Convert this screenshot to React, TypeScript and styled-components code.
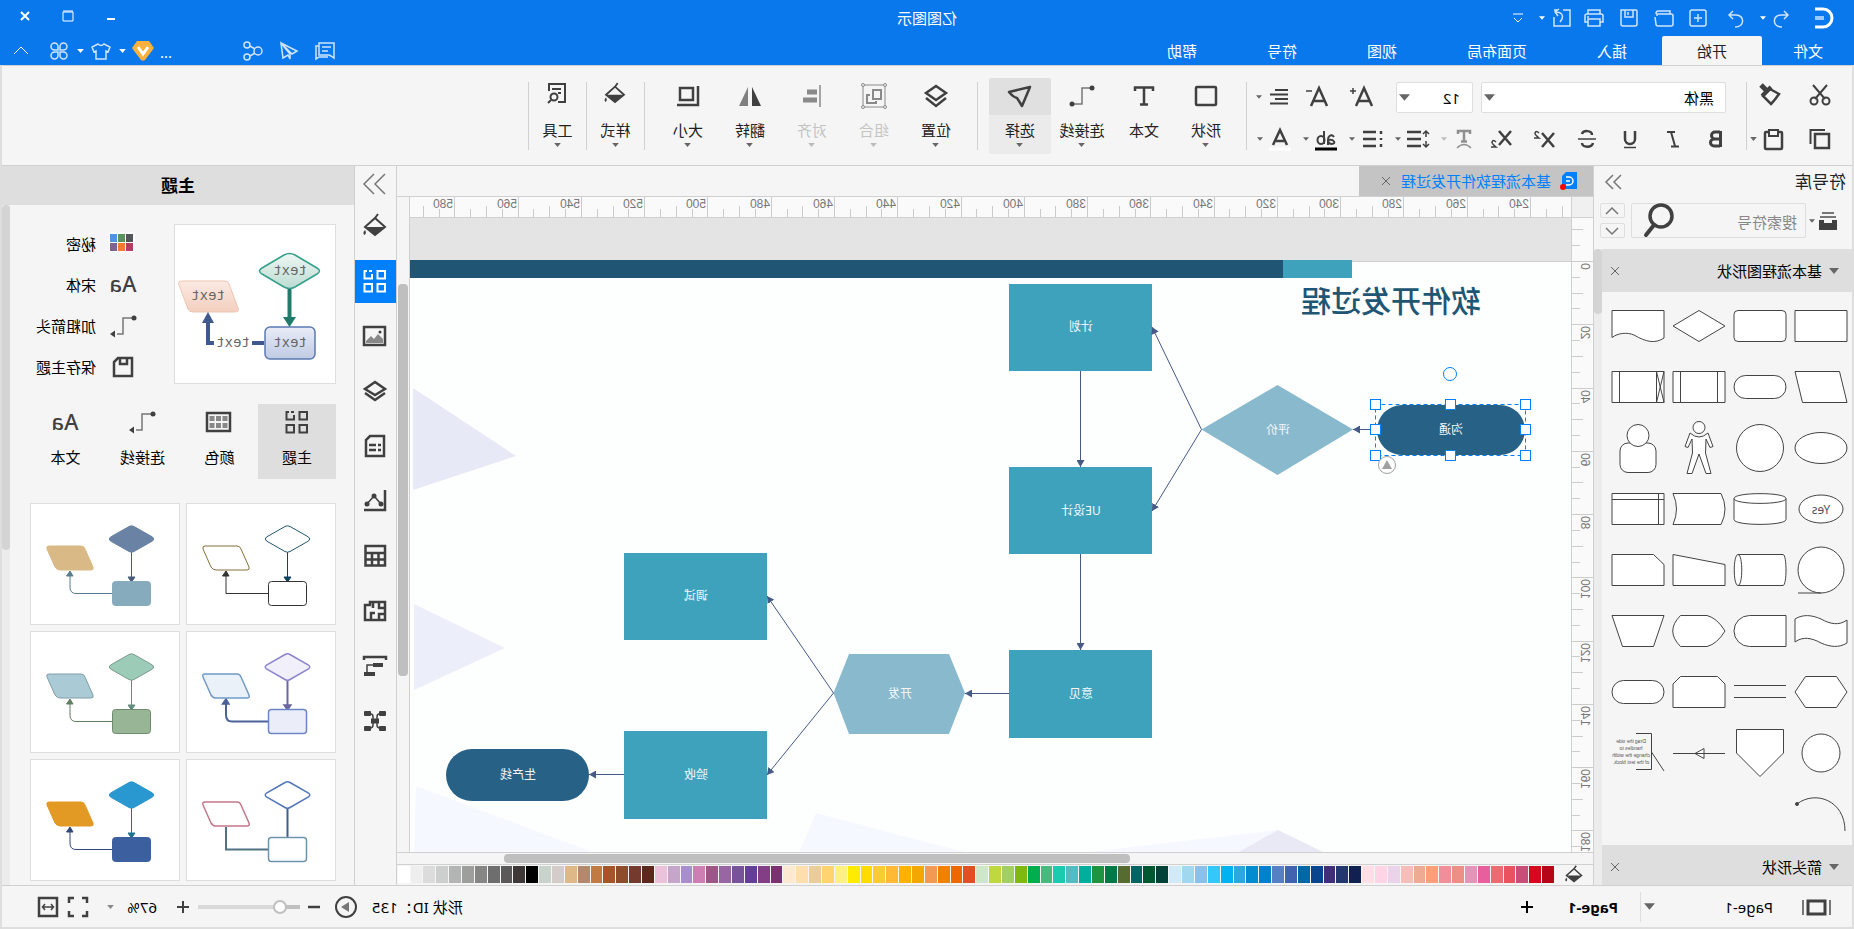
import React from "react";
import styled, { createGlobalStyle, css } from "styled-components";

const ink = "#404040";
const line = "#d0d0d0";
const soft = "#dedede";
const panel = "#f5f5f5";
const brand = "#0a78ed";
const accent = "#0080ff";

const GlobalStyle = createGlobalStyle`
  * { box-sizing: border-box; }
  body {
    margin: 0;
    overflow: hidden;
    font-family: "Noto Sans", "Noto Sans CJK SC", sans-serif;
    font-size: 15px;
    line-height: 20px;
    color: #000;
  }
  button, input, select { font: inherit; color: inherit; }
  button { border: 0; padding: 0; background: none; cursor: pointer; }
`;

/* The whole window is shown as in a mirror. */
const Window = styled.div`
  transform: scaleX(-1);
  display: flex;
  flex-direction: column;
  height: 100vh;
  background: ${panel};
`;

const Art = styled.svg`
  display: block;
  flex: none;
  overflow: visible;
  fill: none;
  stroke: currentColor;
`;

type IconProps = { s?: number; sw?: number; children: React.ReactNode };
const Icon = ({ s = 24, sw = 2, children }: IconProps) => (
  <Art width={s} height={s} viewBox={`${-s / 2} ${-s / 2} ${s} ${s}`} strokeWidth={sw} aria-hidden="true">
    {children}
  </Art>
);

const CaretSvg = styled.svg<{ $c?: string }>`
  display: block;
  flex: none;
  fill: ${(p) => p.$c ?? "#666"};
`;
const Caret = ({ w = 8, c }: { w?: number; c?: string }) => (
  <CaretSvg $c={c} width={w} height={Math.round(w * 0.6)} viewBox="0 0 10 6" aria-hidden="true">
    <path d="M0 0H10L5 6Z" />
  </CaretSvg>
);

/* ---------- title bar ---------- */

const Header = styled.header`
  flex: none;
  color: #fff;
  background: ${brand};
`;
const TitleRow = styled.div`
  display: grid;
  grid-template-columns: 1fr auto 1fr;
  align-items: center;
  height: 36px;
`;
const Quick = styled.div`
  display: flex;
  align-items: center;
  padding-left: 2px;
`;
const Cell = styled.button<{ $w: number }>`
  display: flex;
  align-items: center;
  justify-content: center;
  flex: none;
  width: ${(p) => p.$w}px;
  height: 28px;
`;
const WindowButtons = styled.div`
  display: flex;
  justify-content: flex-end;
  padding: 0 4px 4px 0;
`;
const MenuRow = styled.nav`
  display: flex;
  height: 29px;
`;
const MenuTab = styled.button<{ $on?: boolean }>`
  padding: 0 35px;
  border-radius: 2px 2px 0 0;
  ${(p) => p.$on && css`
    color: #222;
    background: ${panel};
  `}
  &:first-child { padding: 0 31px; }
`;
const MenuActions = styled.div`
  display: flex;
  align-items: center;
  margin-left: auto;
`;
const Share = styled.div`
  display: flex;
  margin-right: 63px;
`;
const Dots = styled.span`
  width: 15px;
  padding-top: 2px;
`;

const pale = "#cfe5ff";

const Logo = () => (
  <Icon s={22} sw={3}>
    <path d="M8 -9H0A9 9 0 0 0 0 9H8" stroke="#fff" />
    <path d="M-1 0H8" stroke="#9cc9fb" strokeWidth={4} />
  </Icon>
);

const TitleBar = () => (
  <Header>
    <TitleRow>
      <Quick>
        <Cell $w={58} aria-label="logo"><Logo /></Cell>
        <Cell $w={26} aria-label="撤销"><Icon><path stroke={pale} strokeWidth={1.5} d="M-3 -7L-7 -3L-3 1M-7 -3H0C9 -3 9 9 -1 9" /></Icon></Cell>
        <Cell $w={10} aria-label="撤销列表"><Caret w={6} c="#fff" /></Cell>
        <Cell $w={44} aria-label="重做"><Icon><path stroke={pale} strokeWidth={1.5} d="M3 -7L7 -3L3 1M7 -3H0C-9 -3 -9 9 1 9" /></Icon></Cell>
        <Cell $w={32} aria-label="新建"><Icon><g stroke={pale} strokeWidth={1.5}><rect x={-8} y={-8} width={16} height={16} rx={2} /><path d="M0 -4V4M-4 0H4" /></g></Icon></Cell>
        <Cell $w={35} aria-label="打开"><Icon><path stroke={pale} strokeWidth={1.5} d="M-6 -4V-7H6Q8 -7 8 -4M-9 -2Q-9 -4 -7 -4H7V-2M-9 -2V6Q-9 8 -7 8H6Q8 8 8 6L9 -1" /></Icon></Cell>
        <Cell $w={35} aria-label="保存"><Icon><path stroke={pale} strokeWidth={1.5} d="M-8 -7Q-8 -8 -7 -8H8V6Q8 8 6 8H-6Q-8 8 -8 6ZM-4 -8V-1H4V-8M1 -6V-3" /></Icon></Cell>
        <Cell $w={35} aria-label="打印"><Icon><path stroke={pale} strokeWidth={1.5} d="M-6 -4V-8H6V-4M-6 4H-9V-2Q-9 -4 -7 -4H7Q9 -4 9 -2V4H6M-6 1H6V8H-6ZM5 -1H7" /></Icon></Cell>
        <Cell $w={30} aria-label="导出"><Icon><path stroke={pale} strokeWidth={1.5} d="M-1 -8H-8V8H8V-1M8 -8H5M2 4C-3 -2 0 -6 7 -6M3 -9L7 -6L4 -2" /></Icon></Cell>
        <Cell $w={10} aria-label="导出列表"><Caret w={6} c="#fff" /></Cell>
        <Cell $w={38} aria-label="自定义"><Icon s={16} sw={1}><path stroke="#fff" d="M-5 -4H5M-4 0L0 4L4 0" /></Icon></Cell>
      </Quick>
      <div>亿图图示</div>
      <WindowButtons>
        <Cell $w={43} aria-label="最小化"><Icon s={16}><path d="M-4 3H4" /></Icon></Cell>
        <Cell $w={43} aria-label="最大化"><Icon s={16} sw={1}><path d="M-5 -4H5V5H-5ZM-5 -5H5" /></Icon></Cell>
        <Cell $w={43} aria-label="关闭"><Icon s={16}><path d="M-4 -4L4 4M4 -4L-4 4" /></Icon></Cell>
      </WindowButtons>
    </TitleRow>
    <MenuRow>
      {["文件", "开始", "插入", "页面布局", "视图", "符号", "帮助"].map((t, i) => (
        <MenuTab key={t} $on={i === 1}>{t}</MenuTab>
      ))}
      <MenuActions>
        <Share>
          <Cell $w={36} aria-label="评论"><Icon><path stroke={pale} strokeWidth={1.5} d="M-9 -8H6V4H-4L-6 5L-9 7ZM6 -5H9V8L6 6H-3M-6 -4H3M-3 0H3" /></Icon></Cell>
          <Cell $w={36} aria-label="发送"><Icon><path stroke={pale} strokeWidth={1.5} d="M8 -8L-8 0L-3 3L8 -8L6 7L1 4L-1 8V3L8 -8" /></Icon></Cell>
          <Cell $w={36} aria-label="分享"><Icon><g stroke={pale} strokeWidth={1.5}><circle cx={-5} cy={0} r={4} /><circle cx={6} cy={-6} r={3} /><circle cx={6} cy={6} r={3} /><path d="M-2 -2L3 -5M-2 2L3 5" /></g></Icon></Cell>
        </Share>
        <Dots>...</Dots>
        <Cell $w={28} aria-label="会员"><Icon><path d="M-6 -10H6L11 -3L2 9Q0 10 -2 9L-11 -3Z" fill="#fdb13d" stroke="none" /><path d="M-5 -4L0 3L5 -4" stroke="#fff" strokeWidth={3} /></Icon></Cell>
        <Cell $w={12} aria-label="会员列表"><Caret w={7} c="#fff" /></Cell>
        <Cell $w={32} aria-label="皮肤"><Icon><path stroke={pale} strokeWidth={1.5} d="M-3 -7Q0 -4 3 -7L9 -4L7 1L5 0V8H-5V0L-7 1L-9 -4Z" /></Icon></Cell>
        <Cell $w={8} aria-label="皮肤列表"><Caret w={7} c="#fff" /></Cell>
        <Cell $w={35} aria-label="应用"><Icon><path stroke={pale} strokeWidth={1.5} d="M-1 -1H-4.5A3.5 3.5 0 1 1 -1 -4.5ZM1 -1V-4.5A3.5 3.5 0 1 1 4.5 -1ZM-1 1V4.5A3.5 3.5 0 1 1 -4.5 1ZM1 1H4.5A3.5 3.5 0 1 1 1 4.5Z" /></Icon></Cell>
        <Cell $w={42} aria-label="收起"><Icon sw={1}><path d="M-7 3L0 -4L7 3" /></Icon></Cell>
      </MenuActions>
    </MenuRow>
  </Header>
);

/* ---------- ribbon ---------- */

const Body = styled.div`
  display: flex;
  flex: 1;
  flex-direction: column;
  min-height: 0;
  border: 2px solid ${soft};
  border-top: 0;
`;
const Ribbon = styled.div`
  display: flex;
  align-items: center;
  flex: none;
  height: 101px;
  border-top: 1px solid ${line};
  border-bottom: 1px solid ${line};
`;
const Rule = styled.div`
  width: 1px;
  height: 68px;
  background: ${line};
`;
const Clipboard = styled.div`
  display: grid;
  grid-template-columns: 50px 43px;
  grid-template-rows: 44px 44px;
  align-items: center;
  padding: 3px 0 0 12px;
  color: ${ink};
`;
const FontGroup = styled.div`
  display: flex;
  flex-direction: column;
  width: 499px;
  padding-top: 5px;
  color: ${ink};
`;
const FontRow = styled.div<{ $left: number }>`
  display: flex;
  align-items: center;
  height: 42px;
  padding-left: ${(p) => p.$left}px;
`;
const SelectBox = styled.div<{ $w: number; $gap: number }>`
  display: grid;
  align-items: center;
  width: ${(p) => p.$w}px;
  margin-right: ${(p) => p.$gap}px;
  > * { grid-area: 1 / 1; }
  > svg { justify-self: end; margin-right: 3px; pointer-events: none; }
`;
const Select = styled.select<{ $pad: number }>`
  appearance: none;
  width: 100%;
  height: 31px;
  padding: 2px 0 0 ${(p) => p.$pad}px;
  border: 1px solid ${soft};
  border-radius: 2px;
  color: #000;
  background: #fff;
`;
const Plain = styled.button<{ $w: number }>`
  display: flex;
  align-items: center;
  justify-content: center;
  width: ${(p) => p.$w}px;
  height: 30px;
`;
const Split = styled.button`
  display: grid;
  grid-template-columns: 24px 8px;
  align-items: center;
  justify-items: center;
  gap: 4px;
  width: 46px;
  height: 30px;
  padding-left: 4px;
  &:disabled { color: #909090; }
`;
const Tools = styled.div<{ $l: number; $r: number }>`
  display: flex;
  padding: 0 ${(p) => p.$r}px 0 ${(p) => p.$l}px;
`;
const Tool = styled.button<{ $on?: boolean; $w?: number }>`
  display: flex;
  flex-direction: column;
  align-items: center;
  width: ${(p) => p.$w ?? 62}px;
  height: 76px;
  border-radius: 2px;
  color: #222;
  background: ${(p) => (p.$on ? "linear-gradient(#e0e0e0 37px, #ebebeb 37px)" : "none")};
  &:disabled { color: #c4c4c4; }
`;
const ToolArt = styled.span<{ $dim?: boolean }>`
  display: grid;
  place-items: center;
  height: 37px;
  margin-bottom: 5px;
  color: ${(p) => (p.$dim ? "#8a8a8a" : ink)};
`;
const ToolCaret = styled.span`
  padding-top: 3px;
`;

type ToolSpec = { label: string; art: React.ReactNode; on?: boolean; off?: boolean; noCaret?: boolean; w?: number };
const ToolButton = ({ label, art, on, off, noCaret, w }: ToolSpec) => (
  <Tool $on={on} $w={w} disabled={off}>
    <ToolArt $dim={off}><Icon s={26}>{art}</Icon></ToolArt>
    {label}
    {!noCaret && <ToolCaret><Caret w={7} c={off ? "#bbb" : "#666"} /></ToolCaret>}
  </Tool>
);

const drawTools: ToolSpec[] = [
  { label: "形状", art: <rect x={-10} y={-9} width={20} height={18} rx={1} strokeWidth={2.5} /> },
  { label: "文本", noCaret: true, art: <path strokeWidth={2.5} d="M-9 -5V-8.5H9V-5M0 -8V9M-4 8.5H4" /> },
  { label: "连接线", art: <><path d="M-8 -8H0V8H9" strokeWidth={1.5} stroke="#777" /><circle cx={-10} cy={-8} r={2.5} fill="currentColor" stroke="none" /><circle cx={10} cy={8} r={2.5} fill="currentColor" stroke="none" /></> },
  { label: "选择", on: true, art: <path strokeWidth={2.5} strokeLinejoin="round" d="M-10 -9L11 -4Q7 1 3 2Q1 5 -2 10Z" /> },
];
const layoutTools: ToolSpec[] = [
  { label: "位置", art: <path strokeWidth={2.5} d="M0 -10L10 -3L0 4L-10 -3ZM-10 2L0 10L10 2" /> },
  { label: "组合", off: true, art: <><rect x={-11} y={-11} width={22} height={22} strokeWidth={1} /><path d="M-7 -6H1V3H-7ZM4 -1H7V7H-2V5" /><g fill={panel} strokeWidth={1}><circle cx={-11} cy={-11} r={1.5} /><circle cx={11} cy={-11} r={1.5} /><circle cx={-11} cy={11} r={1.5} /><circle cx={11} cy={11} r={1.5} /></g></> },
  { label: "对齐", off: true, art: <><path d="M-8 -11V11" strokeWidth={1.5} /><path d="M-5 -4H5M-5 4H9" strokeWidth={5} /></> },
  { label: "翻转", art: <><path d="M-2 -9V10H-11Z" fill={ink} stroke="none" /><path d="M2 -9V10H11Z" fill="#808080" stroke="none" /></> },
  { label: "大小", art: <path strokeWidth={2.5} d="M-5 -8H8V4H-5ZM-10 -10V9H11" /> },
];
const Bucket = ({ k = 1 }: { k?: number }) => (
  <g transform={`scale(${k})`}>
    <path d="M-3 -11L0 -7L10 2L0 10L-10 2L0 -7" strokeWidth={2} />
    <path d="M-9 2H9L0 10Z" fill="currentColor" stroke="none" />
    <path d="M10 5Q13 8 10.5 10Q8 8 10 5Z" fill="currentColor" stroke="none" />
  </g>
);

const RibbonBar = () => (
  <Ribbon>
    <Clipboard>
      <Plain $w={40} aria-label="剪切"><Icon><path strokeWidth={2} d="M-7 -10L5 4M7 -10L-5 4" /><circle cx={-6} cy={6} r={3.5} /><circle cx={6} cy={6} r={3.5} /></Icon></Plain>
      <Plain $w={40} aria-label="格式刷"><Icon><path strokeWidth={2.5} d="M-9 -1L0 -6L7 1L-1 9Q-5 5 -9 -1Z" /><path d="M-1 -8L8 1" strokeWidth={4} /><path d="M4 -5L9 -10" strokeWidth={5} /></Icon></Plain>
      <Plain $w={40} aria-label="复制"><Icon><rect x={-9} y={-5} width={14} height={14} strokeWidth={2.5} /><path d="M-5 -9H9.5V5" /></Icon></Plain>
      <Split aria-label="粘贴"><Icon><rect x={-8} y={-7} width={17} height={17} rx={1} strokeWidth={2.5} /><rect x={-4} y={-9} width={9} height={6} fill={panel} /></Icon><Caret w={7} /></Split>
    </Clipboard>
    <Rule />
    <FontGroup>
      <FontRow $left={20}>
        <SelectBox $w={245} $gap={8}>
          <Select $pad={11} aria-label="字体"><option>黑体</option></Select>
          <Caret w={11} />
        </SelectBox>
        <SelectBox $w={77} $gap={11}>
          <Select $pad={12} aria-label="字号"><option>12</option></Select>
          <Caret w={11} />
        </SelectBox>
        <Plain $w={45} aria-label="增大字号"><Icon><path strokeWidth={2.5} d="M-10 9L-2 -9L6 9M-7 4H3" /><path strokeWidth={1.5} d="M6 -6H12M9 -9V-3" /></Icon></Plain>
        <Plain $w={45} aria-label="减小字号"><Icon><path strokeWidth={2.5} d="M-10 9L-2 -9L6 9M-7 4H3" /><path strokeWidth={1.5} d="M5 -6H11" /></Icon></Plain>
        <Split aria-label="对齐方式"><Icon><path strokeWidth={2} d="M-9 -7H4M-9 -2.5H9M-9 2H4M-9 6.5H9" /></Icon><Caret w={6} /></Split>
      </FontRow>
      <FontRow $left={8}>
        <Plain $w={43} aria-label="粗体"><Icon><path strokeWidth={3} d="M-4.5 -8V8M-4 -7H1A3.5 3.5 0 0 1 1 0H-4M1 0H2A3.5 3.5 0 0 1 2 7H-4" /></Icon></Plain>
        <Plain $w={43} aria-label="斜体"><Icon><path strokeWidth={2} d="M-2 -7H6M-6 7.5H2M2 -7L-2 7" /></Icon></Plain>
        <Plain $w={43} aria-label="下划线"><Icon><path strokeWidth={2.5} d="M-5 -8V0A5 5 0 0 0 5 0V-8" /><path strokeWidth={1.5} d="M-6 8.5H6" /></Icon></Plain>
        <Plain $w={43} aria-label="删除线"><Icon><path strokeWidth={2.5} d="M5 -5C4 -9 -5 -9 -5 -4M5 4C5 9 -5 9 -6 4" /><path strokeWidth={1.5} d="M-9 0H9" /></Icon></Plain>
        <Plain $w={43} aria-label="上标"><Icon><path strokeWidth={2.5} d="M-10 -6L2 8M2 -6L-10 8" /><path strokeWidth={1.5} d="M5 -6Q8 -9 9 -6Q9 -4 5 -1H10" /></Icon></Plain>
        <Plain $w={43} aria-label="下标"><Icon><path strokeWidth={2.5} d="M-10 -8L2 6M2 -8L-10 6" /><path strokeWidth={1.5} d="M5 3Q8 0 9 3Q9 5 5 8H10" /></Icon></Plain>
        <Split aria-label="文字效果" disabled><Icon><path strokeWidth={2.5} d="M-6 -5V-8H6V-5M0 -8V3M-3 2.5H3" /><path strokeWidth={1.5} d="M-7 9Q0 2 7 9" /></Icon><Caret w={6} c="#bbb" /></Split>
        <Split aria-label="行距"><Icon><path strokeWidth={2.5} d="M-3 -7H11M-3 0H11M-3 7H11" /><path strokeWidth={1.5} d="M-8 -7V-2M-8 2V7M-11 -5L-8 -8L-5 -5M-11 5L-8 8L-5 5" /></Icon><Caret w={6} /></Split>
        <Split aria-label="项目符号"><Icon><path strokeWidth={2.5} d="M-4 -7H9M-4 0H9M-4 7H9M-9 -8V-5M-9 -1V1M-9 5V8" /></Icon><Caret w={6} /></Split>
        <Split aria-label="突出显示"><Icon><path strokeWidth={2} d="M-8 -2Q-6 -5 -3.5 -3Q-2 -2 -2 1V6M-2 1C-9 0 -10 5 -6 5Q-3 5 -2 2M2 -8V5" /><ellipse cx={5} cy={1} rx={3.5} ry={4} /><path stroke="#000" strokeWidth={3} d="M-11 10H11" /></Icon><Caret w={6} /></Split>
        <Split aria-label="字体颜色"><Icon><path strokeWidth={2.5} d="M-7 6L0 -9L7 6M-4 2H4" /><path stroke="#fff" strokeWidth={3} d="M-11 10H11" /></Icon><Caret w={6} /></Split>
      </FontRow>
    </FontGroup>
    <Rule />
    <Tools $l={9} $r={11}>{drawTools.map((t) => <ToolButton key={t.label} {...t} />)}</Tools>
    <Rule />
    <Tools $l={10} $r={12}>{layoutTools.map((t) => <ToolButton key={t.label} {...t} />)}</Tools>
    <Rule />
    <ToolButton label="样式" w={57} art={<g transform="translate(0 -3)"><Bucket k={0.9} /></g>} />
    <Rule />
    <ToolButton label="工具" w={57} art={<g transform="translate(0 -3)"><path d="M-1 9H-8V-9H8V-2M-4 -4H5M-4 0H-1" /><circle cx={3} cy={4} r={3.5} /><path d="M6 7L9 10" /></g>} />
    <Rule />
  </Ribbon>
);

/* ---------- symbol library ---------- */

const Main = styled.main`
  display: flex;
  flex: 1;
  min-height: 0;
`;
const Library = styled.aside`
  display: flex;
  flex-direction: column;
  flex: none;
  width: 259px;
  border-right: 1px solid ${line};
  overflow: hidden;
`;
const LibraryHead = styled.div`
  display: flex;
  align-items: center;
  justify-content: space-between;
  flex: none;
  height: 32px;
  margin-bottom: 5px;
  padding: 0 12px 0 6px;
  font-size: 17px;
  color: #222;
`;
const SearchRow = styled.div`
  display: flex;
  align-items: center;
  flex: none;
  height: 35px;
  margin-bottom: 11px;
  padding: 0 5px 0 14px;
  color: ${ink};
`;
const ShelfButton = styled.button`
  display: flex;
  align-items: center;
  gap: 3px;
  width: 32px;
`;
const SearchBox = styled.label`
  display: flex;
  align-items: center;
  width: 175px;
  height: 35px;
  margin-right: 6px;
  padding: 0 14px 0 8px;
  border: 1px solid ${soft};
  border-radius: 2px;
`;
const SearchInput = styled.input`
  flex: 1;
  min-width: 0;
  padding: 2px 0 0;
  border: 0;
  outline: 0;
  background: none;
  &::placeholder { color: #888; opacity: 1; }
`;
const Steps = styled.div`
  display: flex;
  flex-direction: column;
  gap: 5px;
`;
const Step = styled.button`
  display: grid;
  place-items: center;
  width: 25px;
  height: 15px;
  border: 1px solid ${soft};
  border-radius: 2px;
`;
const LibraryScroll = styled.div`
  display: flex;
  flex: 1;
  min-height: 0;
`;
const LibraryList = styled.div`
  flex: 1;
  overflow: hidden;
`;
const Track = styled.div<{ $w: number }>`
  width: ${(p) => p.$w}px;
  background: #ececec;
`;
const Thumb = styled.div<{ $h: number; $dark?: boolean }>`
  height: ${(p) => p.$h}px;
  border-radius: 4px;
  background: ${(p) => (p.$dark ? "#bfbfbf" : "#d4d4d4")};
`;
const Section = styled.h2`
  display: flex;
  align-items: center;
  gap: 7px;
  height: 43px;
  margin: 0;
  padding: 0 6px 0 13px;
  font-size: 15px;
  font-weight: 400;
  background: ${soft};
  > button { margin-left: auto; }
`;
const ShapeGrid = styled.div`
  display: grid;
  grid-template-columns: repeat(4, 61px);
  grid-auto-rows: 61px;
  padding: 3px 0 1px;
`;
const ShapeCell = styled.button`
  display: grid;
  place-items: center;
  color: #444;
  svg { fill: #fff; stroke-width: 1px; }
`;
const YesText = styled.text`
  font-size: 12px;
  text-anchor: middle;
  fill: #555;
  stroke: none;
`;
const NoteText = styled(YesText)`
  font-family: "Liberation Sans", sans-serif;
  font-size: 5px;
`;

const box = "M-26 -15.5H26V15.5H-26Z";
const Capsule = () => <rect x={-26} y={-11.5} width={52} height={23} rx={11.5} />;
const shapes: [string, React.ReactNode][] = [
  ["流程", <path d={box} />],
  ["圆角流程", <rect x={-26} y={-15.5} width={52} height={31} rx={4} />],
  ["判定", <path d="M0 -15.5L26 0L0 15.5L-26 0Z" />],
  ["文档", <path d="M-26 -15.5H26V11.5C20 7 11 6 4 9C-8 16 -17 18 -26 12Z" />],
  ["数据", <path d="M-18.5 -15.5H26L18.5 15.5H-26Z" />],
  ["起始", <Capsule />],
  ["预定义流程", <path d={`${box}M-18.5 -15.5V15.5M18.5 -15.5V15.5`} />],
  ["交叉流程", <path d={`${box}M-18.5 -15.5V15.5L-26 -15.5M-26 15.5L-18.5 -15.5M18.5 -15.5V15.5`} />],
  ["椭圆", <ellipse rx={26} ry={15.5} />],
  ["圆", <circle r={23.5} />],
  ["人", <><path d="M-9 -15L-14 -1.5L-11 -.5L-7 -9L-6.5 5L-12 25.5H-7L0 6L7 25.5H12L6.5 5L7 -9L11 -.5L14 -1.5L9 -15Q0 -7 -9 -15Z" /><circle cy={-20.5} r={6} /></>],
  ["用户", <><rect x={-18} y={-5} width={36} height={29.5} rx={8} /><circle cy={-12.5} r={11} /></>],
  ["是", <><ellipse rx={22} ry={14} /><YesText y={5}>Yes</YesText></>],
  ["数据库", <path d="M-26 -10.5V10.5C-26 17 26 17 26 10.5V-10.5C26 -17 -26 -17 -26 -10.5C-26 -4 26 -4 26 -10.5" />],
  ["存储数据", <path d="M-22 -15.5H26Q19 0 26 15.5H-22Q-30 0 -22 -15.5Z" />],
  ["内部存储", <path d={`${box}M-20.5 -15.5V15.5M-26 -9.5H26`} />],
  ["顺序数据", <><circle r={23} /><path d="M0 23H23" /></>],
  ["直接数据", <path d="M22 -15.5H-23C-27 -15.5 -27 15.5 -23 15.5H22C27 15.5 27 -15.5 22 -15.5C17 -15.5 17 15.5 22 15.5" />],
  ["手动输入", <path d="M-26 -5.5L26 -15.5V15.5H-26Z" />],
  ["卡片", <path d="M-15.5 -15.5H26V15.5H-26V-5.5Z" />],
  ["纸带", <path d="M26 -12C18 -17 9 -16 0 -12C-9 -7 -18 -5 -26 -11V12C-18 17 -9 16 0 12C9 7 18 5 26 11Z" />],
  ["延迟", <path d="M-26 -15.5H10.5A15.5 15.5 0 0 1 10.5 15.5H-26Z" />],
  ["显示", <path d="M18.5 -15.5Q34 0 18.5 15.5H-8Q-18 13 -26 0Q-18 -13 -8 -15.5Z" />],
  ["手动操作", <path d="M-26 -15.5H26L15.5 15.5H-15.5Z" />],
  ["准备", <path d="M-15.5 -15.5H15.5L26 0L15.5 15.5H-15.5L-26 0Z" />],
  ["并行", <path d="M-26 -6.5H26M-26 5.5H26" />],
  ["循环限值", <path d="M-18.5 -15.5H18.5L26 -8V15.5H-26V-8Z" />],
  ["终止", <Capsule />],
  ["引用", <circle r={19} />],
  ["离页引用", <path d="M-23.5 -23.5H23.5V0L0 23.5L-23.5 0Z" />],
  ["箭头线", <path d="M-26 .5H26M-5 -4.5V5.5L4 .5Z" />],
  ["批注", <><path fill="none" d="M2 -19.5H-13.5V16.5H2M-13.5 -1L-26 18" /><NoteText x={7} y={-10}>Drag the side</NoteText><NoteText x={7} y={-3}>handles to</NoteText><NoteText x={7} y={4}>change the width</NoteText><NoteText x={7} y={11}>of the text block.</NoteText></>],
  ["弧线", <><path fill="none" d="M24 -10C6 -24 -24 -14 -24 17" /><circle cx={24} cy={-10} r={1.5} fill="#444" /></>],
];

const Cross = () => <Icon s={14} sw={1}><path stroke="#666" d="M-4 -4L4 4M4 -4L-4 4" /></Icon>;

const SymbolLibrary = () => (
  <Library>
    <LibraryHead>
      符号库
      <button aria-label="收起符号库"><Icon s={16} sw={1.5}><path stroke="#777" d="M-7 -7L0 0L-7 7M1 -7L8 0L1 7" /></Icon></button>
    </LibraryHead>
    <SearchRow>
      <ShelfButton aria-label="符号库列表">
        <Icon s={20}><path stroke="#777" strokeWidth={2} d="M-6 -8H6M-8 -4H8" /><path fill={ink} stroke="none" d="M-9 -1H-4V2H4V-1H9V9H-9Z" /></Icon>
        <Caret w={6} />
      </ShelfButton>
      <SearchBox>
        <SearchInput placeholder="搜索符号" aria-label="搜索符号" />
        <Icon s={32} sw={4}><circle cx={1} cy={-5} r={11} strokeWidth={3.5} /><path d="M8 4L16 14" strokeLinecap="round" /></Icon>
      </SearchBox>
      <Steps>
        <Step aria-label="上一个"><Icon s={12} sw={1.5}><path stroke="#777" d="M-6 3L0 -3L6 3" /></Icon></Step>
        <Step aria-label="下一个"><Icon s={12} sw={1.5}><path stroke="#777" d="M-6 -3L0 3L6 -3" /></Icon></Step>
      </Steps>
    </SearchRow>
    <LibraryScroll>
      <LibraryList>
        <Section><Caret w={10} />基本流程图形状<button aria-label="关闭基本流程图形状"><Cross /></button></Section>
        <ShapeGrid>
          {shapes.map(([name, art]) => (
            <ShapeCell key={name} aria-label={name}>
              <Art width={60} height={56} viewBox="-30 -28 60 56">{art}</Art>
            </ShapeCell>
          ))}
        </ShapeGrid>
        <Section><Caret w={10} />箭头形状<button aria-label="关闭箭头形状"><Cross /></button></Section>
      </LibraryList>
      <Track $w={8}><Thumb $h={65} /></Track>
    </LibraryScroll>
  </Library>
);

/* ---------- drawing area ---------- */

const Workspace = styled.section`
  display: flex;
  flex: 1;
  flex-direction: column;
  min-width: 0;
`;
const DocTabs = styled.div`
  display: flex;
  flex: none;
  height: 31px;
  border-bottom: 1px solid ${line};
`;
const DocTab = styled.div`
  display: flex;
  align-items: center;
  width: 234px;
  padding: 0 20px 0 14px;
  color: ${accent};
  background: #c4c4c4;
  > span { flex: 1; margin-left: 10px; white-space: nowrap; }
`;
const Stage = styled.div`
  display: grid;
  grid-template: 21px minmax(0, 1fr) / 22px minmax(0, 1fr) 13px;
  flex: 1;
  min-height: 0;
`;
const Corner = styled.div`
  border-right: 1px solid ${line};
  border-bottom: 1px solid ${line};
  background: #f0f0f0;
`;
const RulerArt = styled.svg`
  display: block;
  width: 100%;
  height: 100%;
  overflow: hidden;
  background: #fafafa;
  line { stroke: #ccc; }
  text { font-family: "Liberation Sans", sans-serif; font-size: 12px; fill: #777; }
`;
const HRule = styled.div`
  border-bottom: 1px solid ${line};
`;
const VRule = styled.div`
  min-height: 0;
  border-right: 1px solid ${line};
`;
const VScroll = styled.div`
  grid-column: 3;
  grid-row: 1 / 3;
  padding: 87px 1px 0;
  border-left: 1px solid ${line};
`;
const Canvas = styled.div`
  min-height: 0;
  overflow: hidden;
  background: #e4e4e4;
  svg { display: block; }
  text { font-size: 12px; text-anchor: middle; fill: #f2f8fb; }
`;
const Heading = styled.text`
  && { font-size: 30px; font-weight: 500; fill: #205674; text-anchor: start; }
`;
const HScroll = styled.div`
  display: flex;
  flex: none;
  height: 12px;
  padding: 1px 107px 1px 463px;
  border-top: 1px solid ${line};
`;
const HThumb = styled.div`
  flex: 1;
  border-radius: 4px;
  background: #bfbfbf;
`;
const Palette = styled.div`
  display: flex;
  align-items: center;
  flex: none;
  height: 21px;
  padding: 0 0 2px 9px;
  border-top: 1px solid ${line};
  color: ${ink};
  > svg { margin-right: 10px; }
`;
const Swatches = styled.div`
  display: flex;
  flex: 1;
  gap: 1px;
`;
const Swatch = styled.button<{ $c: string }>`
  flex: 1;
  height: 17px;
  background: #${(p) => p.$c};
`;

const step = 63.27;
const range = (a: number, b: number) => Array.from({ length: b - a }, (_, i) => a + i);

const HRuler = () => (
  <RulerArt aria-hidden="true">
    {range(-4, 100).map((q) => {
      const x = Math.round(40 + (q * step) / 4);
      const h = q % 4 === 0 ? 20 : q % 2 === 0 ? 11 : 8;
      return <line key={q} x1={x + 0.5} x2={x + 0.5} y1={20 - h} y2={20} />;
    })}
    {range(0, 18).map((m) => <text key={m} x={Math.round(42 + m * step)} y={11}>{240 + m * 20}</text>)}
  </RulerArt>
);
const VRuler = () => (
  <RulerArt aria-hidden="true">
    {range(-3, 60).map((q) => {
      const y = Math.round(43 + (q * step) / 4);
      const w = q % 4 === 0 ? 21 : q % 2 === 0 ? 11 : 8;
      return <line key={q} x1={21 - w} x2={21} y1={y + 0.5} y2={y + 0.5} />;
    })}
    {range(0, 10).map((m) => {
      const y = Math.round(45 + m * step);
      return <text key={m} x={12} y={y} textAnchor="end" transform={`rotate(-90 12 ${y})`}>{m * 20}</text>;
    })}
  </RulerArt>
);

const steel = "#455a87";
const teal = "#3fa2bd";
const deep = "#286186";
const mist = "#89b9cd";

const links = [
  "M478 429.5H501",
  "M652.5 429.5L702 327",
  "M652.5 429.5L702 511",
  "M773.5 371V467",
  "M773.5 554V650",
  "M845 693.5H889",
  "M1020.5 693L1087 596",
  "M1020.5 693L1087 775",
  "M1230 774.5H1265",
];
const labels: [number, number, string][] = [
  [403, 434, "沟通"],
  [576, 434, "评价"],
  [773, 331, "计划"],
  [773, 515, "UE设计"],
  [773, 698, "意见"],
  [954, 698, "开发"],
  [1158, 600, "调试"],
  [1158, 779, "验收"],
  [1336, 779, "生产线"],
];

const Diagram = () => (
  <svg width="100%" height="100%" role="img" aria-label="软件开发过程">
    <defs>
      <marker id="head" markerWidth="8" markerHeight="8" refX="7" refY="4" orient="auto" markerUnits="userSpaceOnUse">
        <path d="M0 0L7 4L0 8Z" fill={steel} />
      </marker>
    </defs>
    <g transform="translate(-283 -218)">
      <rect x={283} y={261} width={1161} height={700} fill="#fdfefe" />
      <path d="M283 261.5H1444" stroke={line} />
      <path d="M1441 388L1338 456L1441 490Z" fill="#e8e9f6" />
      <path d="M1440 604L1349 648L1440 690Z" fill="#eceffa" />
      <path d="M1438 786L1262 852L1440 852ZM1038 813L1055 853H886ZM576 830L774 853H617Z" fill="#f5f8fe" />
      <path d="M576 830L617 853H529Z" fill="#e9e9f6" />
      <rect x={571} y={260} width={873} height={18} fill="#205674" />
      <rect x={502} y={260} width={69} height={18} fill={teal} />
      <Heading x={373} y={312}>软件开发过程</Heading>

      <g fill={teal}>
        <rect x={702} y={284} width={143} height={87} />
        <rect x={702} y={467} width={143} height={87} />
        <rect x={702} y={650} width={143} height={88} />
        <rect x={1087} y={553} width={143} height={87} />
        <rect x={1087} y={731} width={143} height={88} />
      </g>
      <g fill={deep}>
        <rect x={329} y={405} width={148} height={50} rx={25} />
        <rect x={1265} y={749} width={143} height={52} rx={26} />
      </g>
      <g fill={mist}>
        <path d="M501 429.5L576.5 385L652.5 429.5L576.5 475Z" />
        <path d="M889 693L905 654H1005L1020.5 693L1005 734H905Z" />
      </g>

      <g fill="none" stroke={steel}>
        {links.map((d) => <path key={d} d={d} markerEnd="url(#head)" />)}
      </g>
      {labels.map(([x, y, t]) => <text key={t} x={x} y={y}>{t}</text>)}

      <g stroke={accent} fill="#fff">
        <rect x={328.5} y={404.5} width={150} height={51} fill="none" strokeDasharray="4 3" />
        <circle cx={404} cy={374} r={6.5} />
        {[328, 403, 478].flatMap((x) => [404, 429, 455].filter((y) => x !== 403 || y !== 429).map((y) => (
          <rect key={`${x}-${y}`} x={x - 4.5} y={y - 4.5} width={10} height={10} />
        )))}
      </g>
      <circle cx={467} cy={465} r={8.5} fill="#fff" stroke="#a0a0a0" />
      <path d="M467 460L472 469H462Z" fill="#a0a0a0" />
    </g>
  </svg>
);

const colours = (
  "b50516 d90620 c74f77 ea5260 eb6b70 e75f9c e295b7 ed8f85 f18e99 ff9e78 efaa93 f6bdb9 ead4e9 ffd4e5 ffdfe5 " +
  "102150 243870 412e79 08458d 0068a4 4162ae 5680c4 0080cf 008ccf 2da7e0 00b2f0 33c8f9 8ac0ea a1d8ef d0ebf7 " +
  "004238 005831 006462 556b2f 007947 1f9440 00ae9d 52bcc2 1bcbb0 4ab97e 00ae50 7fb80e a3cf62 c0d840 cee7c8 " +
  "e25022 ee6800 f28100 f29a54 f2a800 ffb001 ffb934 fbcb34 ffdb00 ffeb00 fef182 fed370 eacd98 ffdeae fde8d2 " +
  "7b316f 823f86 653f97 775499 9866a2 9c5787 cd7eb2 a98ece c5a5ca ebc2da 5b281b 743a2e 8f4c2a a85428 c17a42 " +
  "b5886d deb887 d4ccc8 c9d2cb 000000 3e3838 5a5858 6e6e6e 868685 9c9f9c b2b5b4 cccfce dcdcdc eeeeee ffffff"
).split(" ");

const DrawingArea = () => (
  <Workspace>
    <DocTabs>
      <DocTab>
        <Icon s={18}><path d="M-7 -9H4L8 -5V8H-7Z" fill={accent} stroke="none" /><path d="M4 -4H1A4 4 0 0 0 1 4H4M0 0H4" stroke="#fff" strokeWidth={1.5} /><circle cx={7} cy={6} r={3} fill="red" stroke="none" /></Icon>
        <span>基本流程软件开发过程</span>
        <button aria-label="关闭文档"><Cross /></button>
      </DocTab>
    </DocTabs>
    <Stage>
      <Corner />
      <HRule><HRuler /></HRule>
      <VRule><VRuler /></VRule>
      <Canvas><Diagram /></Canvas>
      <VScroll><Thumb $h={392} $dark /></VScroll>
    </Stage>
    <HScroll><HThumb /></HScroll>
    <Palette>
      <Icon s={20}><Bucket k={0.75} /></Icon>
      <Swatches>{colours.map((c) => <Swatch key={c} $c={c} aria-label={`#${c}`} />)}</Swatches>
    </Palette>
  </Workspace>
);

/* ---------- side tools and theme panel ---------- */

const SideBar = styled.div`
  display: flex;
  flex-direction: column;
  flex: none;
  width: 43px;
  border: solid ${line};
  border-width: 0 1px;
  color: ${ink};
`;
const SideButton = styled.button<{ $on?: boolean }>`
  display: grid;
  place-items: center;
  height: 43px;
  margin-bottom: 12px;
  padding-bottom: 2px;
  color: ${(p) => (p.$on ? "#fff" : ink)};
  background: ${(p) => (p.$on ? accent : "none")};
  &:first-child { height: 37px; margin-bottom: 1px; }
  &:nth-child(2) { margin-bottom: 13px; }
`;

const ThemeGlyph = () => (
  <>
    <rect x={-10} y={-10} width={7.5} height={7.5} />
    <path d="M3 -10H6M8 -10H10.5V-2.5H3V-7" />
    <rect x={-10} y={3} width={7.5} height={7.5} />
    <rect x={3} y={3} width={7.5} height={7.5} />
  </>
);

const sideIcons: [string, React.ReactNode][] = [
  ["展开", <path d="M-10 -10L0 0L-10 10M1 -10L11 0L1 10" strokeWidth={1.5} stroke="#777" />],
  ["填充", <Bucket />],
  ["主题", <ThemeGlyph />],
  ["图片", <><rect x={-10} y={-9} width={21} height={18} strokeWidth={2.5} /><path d="M-8 7V3L-3 -2L1 3L4 0L9 5V7Z" fill="#888" stroke="none" /><circle cx={-5} cy={-4} r={1.5} fill={ink} stroke="none" /></>],
  ["图层", <path strokeWidth={2.5} d="M0 -9L10 -2L0 4L-10 -2ZM-10 2L0 9L10 2" />],
  ["页面", <path strokeWidth={2.5} d="M-9 -10H5L9 -6V10H-9ZM-6 -1H-3M-6 4H-3M-1 -1H6M-1 4H6" />],
  ["图表", <><path strokeWidth={2.5} d="M-10 -11V9H11" /><path strokeWidth={1.5} d="M-6 3L1 -5L8 3" /><g fill={ink} stroke="none"><circle cx={-6} cy={3} r={2.5} /><circle cx={1} cy={-5} r={2.5} /><circle cx={8} cy={3} r={2.5} /></g></>],
  ["表格", <path strokeWidth={2.5} d="M-10 -10H9.5V9.5H-10ZM-10 -3H9.5M-10 3.5H9.5M-3.5 -3V9.5M3 -3V9.5" />],
  ["平面图", <path strokeWidth={2.5} d="M-10 -9H5V-6H10V9H-10ZM-4 -9V-3H-10M2 -9V-3M-10 3H-4V9M4 9V2H0" />],
  ["甘特图", <><path strokeWidth={2.5} d="M-11 -6V-9H11V-6" /><path strokeWidth={4} d="M-8 -1H2M0 8H11" /><path strokeWidth={1.5} d="M1 -1H8V8" /></>],
  ["思维导图", <><path strokeWidth={1.5} d="M-5 -7H-4Q-2 -7 -2 -4V4Q-2 7 -5 7M5 -7H4Q2 -7 2 -4V4Q2 7 5 7" /><g fill={ink} stroke="none"><rect x={-11} y={-10} width={7} height={5} rx={1} /><rect x={4} y={-10} width={7} height={5} rx={1} /><rect x={-11} y={5} width={7} height={5} rx={1} /><rect x={4} y={5} width={7} height={5} rx={1} /><rect x={-4} y={-2.5} width={8} height={5} /></g></>],
];

const Theme = styled.aside`
  display: flex;
  flex-direction: column;
  flex: none;
  width: 352px;
`;
const ThemeTitle = styled.h1`
  flex: none;
  margin: 0;
  font-size: 17px;
  line-height: 39px;
  text-align: center;
  background: ${soft};
`;
const ThemeBody = styled.div`
  display: flex;
  flex: 1;
  min-height: 0;
`;
const ThemeContent = styled.div`
  flex: 1;
  overflow: hidden;
  padding: 19px 20px 0 18px;
`;
const Current = styled.div`
  display: flex;
  align-items: flex-start;
  gap: 38px;
  height: 180px;
`;
const Card = styled.button`
  display: block;
  border: 1px solid ${soft};
  background: #fff;
`;
const Options = styled.ul`
  margin: 0;
  padding: 0;
  list-style: none;
`;
const Option = styled.li`
  > button {
    display: flex;
    align-items: center;
    gap: 14px;
    height: 41px;
    padding-bottom: 2px;
    white-space: nowrap;
    > svg { color: ${ink}; }
  }
`;
const ThemeTabs = styled.div`
  display: grid;
  grid-template-columns: 78px repeat(3, 77px);
  margin-bottom: 24px;
`;
const ThemeTab = styled.button<{ $on?: boolean }>`
  display: flex;
  flex-direction: column;
  align-items: center;
  gap: 12px;
  height: 75px;
  padding-top: 5px;
  background: ${(p) => (p.$on ? soft : "none")};
  > svg { color: ${ink}; }
`;
const Cards = styled.div`
  display: grid;
  grid-template-columns: repeat(2, 150px);
  gap: 6px;
`;
const Aa = styled.text`
  font-size: 22px;
  font-weight: 500;
  fill: ${ink};
  stroke: none;
  text-anchor: middle;
`;
const Sample = styled.text`
  font-family: "Liberation Mono", monospace;
  font-size: 14px;
  fill: #666;
  stroke: none;
  text-anchor: middle;
`;

const Link = () => <><path d="M-9 -8H0V8H6" strokeWidth={1.5} stroke="#777" /><circle cx={-11} cy={-8} r={2.5} fill="currentColor" stroke="none" /><path d="M8 4.5L13 8L8 11.5Z" fill="currentColor" stroke="none" /></>;
const chips = ["#51565a", "#5a915c", "#4f93e0", "#b63c64", "#f37a31", "#80648c"];

const Preview = () => (
  <Art width={160} height={158} viewBox="1 1 160 158">
    <defs>
      <linearGradient id="mint" x2="0" y2="1"><stop offset="0" stopColor="#eef6f3" /><stop offset="1" stopColor="#bcdcd2" /></linearGradient>
      <linearGradient id="peach" x2="0" y2="1"><stop offset="0" stopColor="#fbeae3" /><stop offset="1" stopColor="#f3cfbf" /></linearGradient>
      <linearGradient id="lilac" x2="0" y2="1"><stop offset="0" stopColor="#eaecf7" /><stop offset="1" stopColor="#bfcae3" /></linearGradient>
    </defs>
    <g strokeWidth={1.5}>
      <path d="M41 31Q46.5 28 52 31L74 44Q79 47 74 50L52 63Q46.5 66 41 63L19 50Q14 47 19 44Z" fill="url(#mint)" stroke="#35a08b" />
      <path d="M111 57H153Q159 57 157 61L148 85Q147 88 143 88H102Q96 88 98 84L107 60Q108 57 111 57Z" fill="url(#peach)" stroke="#eec5b2" strokeWidth={1} />
      <rect x={21} y={103} width={50} height={32} rx={5} fill="url(#lilac)" stroke="#5b79b3" />
    </g>
    <path d="M46.5 65V95" stroke="#217b6a" strokeWidth={4} /><path d="M40 93H53L46.5 103Z" fill="#217b6a" stroke="none" />
    <path d="M72 119H84M122 119H128V97" stroke="#40598d" strokeWidth={4} /><path d="M122 99H134L128 88Z" fill="#40598d" stroke="none" />
    <Sample x={46} y={51}>text</Sample>
    <Sample x={128} y={76}>text</Sample>
    <Sample x={46} y={123}>text</Sample>
    <Sample x={103} y={123}>text</Sample>
  </Art>
);

type Look = { d: [string, string]; p: [string, string]; r: [string, string]; v: string; c: string; w: number; lw: number; round?: boolean; bare?: boolean };
const looks: Look[] = [
  { d: ["#fff", "#24566f"], p: ["#fff", "#86703c"], r: ["#fff", "#333"], v: "#0f4560", c: "#333", w: 1, lw: 1 },
  { d: ["#6a82a3", "#6a82a3"], p: ["#d9b985", "#d9b985"], r: ["#85abbd", "#85abbd"], v: "#4b5c78", c: "#587f8f", w: 1, lw: 1, round: true },
  { d: ["#f1effa", "#8c84cc"], p: ["#ebf1f9", "#6f9cc8"], r: ["#ebeef8", "#6d86c6"], v: "#6c689f", c: "#4c629b", w: 1.5, lw: 2, round: true },
  { d: ["#9ccbb8", "#7c9b8d"], p: ["#aacbd5", "#7f9ea7"], r: ["#98b696", "#6f8b6d"], v: "#628d7f", c: "#617f62", w: 1, lw: 1, round: true },
  { d: ["#fff", "#5277b7"], p: ["#fff", "#c1788a"], r: ["#fff", "#6d94aa"], v: "#405e91", c: "#507384", w: 1.5, lw: 2, bare: true },
  { d: ["#2997d0", "#2997d0"], p: ["#e29a25", "#e29a25"], r: ["#3c5f9f", "#3c5f9f"], v: "#207292", c: "#31487a", w: 1, lw: 1, round: true },
];

const LookArt = ({ d, p, r, v, c, w, lw, round, bare }: Look) => (
  <Art width={148} height={120} viewBox="1 1 148 120" strokeWidth={w}>
    <path d={`M48.5 49V${bare ? 79 : 75}`} stroke={v} strokeWidth={lw} />
    {!bare && <path d="M45 74H52L48.5 79Z" fill={v} stroke={v} />}
    <path d={round ? "M68 90.5H104Q110 90.5 110 84V70" : "M68 90.5H110V68"} stroke={c} strokeWidth={lw} />
    {!bare && <path d="M107 73H113.5L110 68Z" fill={c} stroke={c} />}
    <path d="M46 23.5Q48.5 22 51 23.5L69.5 34Q72 36 69.5 38L51 48.5Q48.5 50 46 48.5L27.5 38Q25 36 27.5 34Z" fill={d[0]} stroke={d[1]} />
    <path d="M99 43H131Q134 43 133 46L125 64Q123 67 120 67H89Q86 67 87 64L95 46Q96 43 99 43Z" fill={p[0]} stroke={p[1]} />
    <rect x={29.5} y={78.5} width={38} height={24} rx={3} fill={r[0]} stroke={r[1]} />
  </Art>
);

const ThemePanel = () => (
  <Theme>
    <ThemeTitle>主题</ThemeTitle>
    <ThemeBody>
      <ThemeContent>
        <Current>
          <Card aria-label="当前主题"><Preview /></Card>
          <Options>
            <Option><button><Icon s={26}><rect x={-12} y={-12} width={26} height={20} fill="#fff" stroke="none" />{chips.map((c, i) => <rect key={c} x={-10 + (i % 3) * 8} y={i < 3 ? -10 : -1} width={7} height={8} fill={c} stroke="none" />)}</Icon>秘密</button></Option>
            <Option><button><Icon s={26}><Aa y={7}>Aa</Aa></Icon>宋体</button></Option>
            <Option><button><Icon s={26}><Link /></Icon>加粗箭头</button></Option>
            <Option><button><Icon s={26}><path strokeWidth={2.5} d="M-9 -9H5L9 -5V9H-9ZM-4 -9V-3H3V-9" /></Icon>保存主题</button></Option>
          </Options>
        </Current>
        <ThemeTabs>
          <ThemeTab $on><Icon s={26}><ThemeGlyph /></Icon>主题</ThemeTab>
          <ThemeTab><Icon s={26}><rect x={-11} y={-9} width={23} height={18} strokeWidth={2.5} /><path stroke="#888" strokeWidth={5} strokeDasharray="5 1.5" d="M-8.5 -3.5H10M-8.5 3.5H10" /></Icon>颜色</ThemeTab>
          <ThemeTab><Icon s={26}><Link /></Icon>连接线</ThemeTab>
          <ThemeTab><Icon s={26}><Aa y={8}>Aa</Aa></Icon>文本</ThemeTab>
        </ThemeTabs>
        <Cards>
          {looks.map((l, i) => <Card key={i} aria-label={`主题 ${i + 1}`}><LookArt {...l} /></Card>)}
        </Cards>
      </ThemeContent>
      <Track $w={8}><Thumb $h={345} /></Track>
    </ThemeBody>
  </Theme>
);

/* ---------- status bar ---------- */

const Status = styled.footer`
  display: flex;
  align-items: center;
  justify-content: space-between;
  flex: none;
  height: 42px;
  border-top: 1px solid ${line};
`;
const Pages = styled.div`
  display: flex;
  align-items: center;
  height: 100%;
  padding-left: 20px;
  > svg { color: ${ink}; }
`;
const PageSelect = styled.button`
  display: flex;
  align-items: center;
  justify-content: space-between;
  width: 132px;
  margin-left: 29px;
  padding-right: 3px;
`;
const PageRule = styled.div`
  width: 1px;
  height: 30px;
  margin-right: 22px;
  background: ${soft};
`;
const PageTab = styled.button`
  width: 72px;
  font-weight: 700;
  text-align: left;
`;
const Zoom = styled.div`
  display: flex;
  align-items: center;
  padding-right: 31px;
  color: ${ink};
`;
const ShapeId = styled.span`
  margin-right: 8px;
  color: #000;
`;
const Percent = styled.button`
  display: flex;
  align-items: center;
  justify-content: space-between;
  width: 50px;
  margin: 0 14px 0 11px;
  color: #000;
`;
const Slider = styled.input`
  appearance: none;
  width: 102px;
  height: 14px;
  margin: 0;
  background: linear-gradient(90deg, #bfbfbf 14px, #d9d9d9 14px) center / 100% 4px no-repeat;
  &::-webkit-slider-thumb {
    appearance: none;
    width: 14px;
    height: 14px;
    border: 2px solid #bfbfbf;
    border-radius: 50%;
    background: #fff;
  }
`;

const Plus = () => <Icon><path d="M0 -6V6M-6 0H6" /></Icon>;

const StatusBar = () => (
  <Status>
    <Pages>
      <Icon s={30}><rect x={-8} y={-6} width={17} height={13} strokeWidth={3} /><path d="M-13 -7V8M14 -7V8" stroke="#777" /></Icon>
      <PageSelect>Page-1<Caret w={11} /></PageSelect>
      <PageRule />
      <PageTab>Page-1</PageTab>
      <Cell $w={38} aria-label="添加页面"><Plus /></Cell>
    </Pages>
    <Zoom>
      <ShapeId>形状 ID：135</ShapeId>
      <Cell $w={36} aria-label="播放"><Icon><circle r={10} /><path d="M-3 -5L5 0L-3 5Z" fill="#777" stroke="none" /></Icon></Cell>
      <Cell $w={28} aria-label="缩小"><Icon sw={2.5}><path d="M-6 0H6" /></Icon></Cell>
      <Slider type="range" aria-label="缩放" min={0} max={100} defaultValue={15} />
      <Cell $w={30} aria-label="放大"><Plus /></Cell>
      <Percent>67%<Caret w={7} c="#888" /></Percent>
      <Cell $w={30} aria-label="全屏"><Icon sw={2.5}><path d="M-9 -4V-9H-4M4 -9H9V-4M9 4V9H4M-4 9H-9V4" /></Icon></Cell>
      <Cell $w={30} aria-label="适合宽度"><Icon sw={2.5}><path d="M-9 -9H9V9H-9Z" /><path strokeWidth={1.5} d="M-5 0H5M-3 -3L-5.5 0L-3 3M3 -3L5.5 0L3 3" /></Icon></Cell>
    </Zoom>
  </Status>
);

export default function App() {
  return (
    <Window>
      <GlobalStyle />
      <TitleBar />
      <Body>
        <RibbonBar />
        <Main>
          <SymbolLibrary />
          <DrawingArea />
          <SideBar>
            {sideIcons.map(([name, art], i) => (
              <SideButton key={name} $on={i === 2} aria-label={name}><Icon>{art}</Icon></SideButton>
            ))}
          </SideBar>
          <ThemePanel />
        </Main>
        <StatusBar />
      </Body>
    </Window>
  );
}
